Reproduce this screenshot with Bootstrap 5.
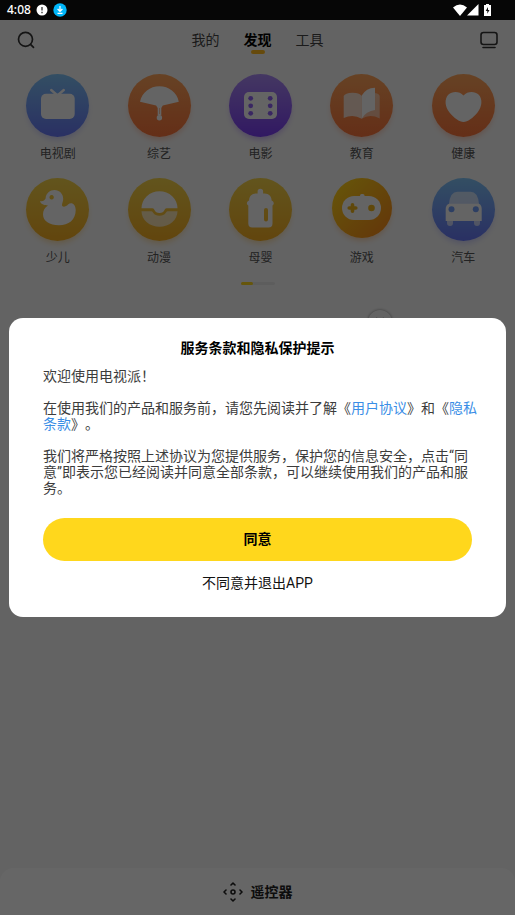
<!DOCTYPE html>
<html lang="zh-CN">
<head>
<meta charset="utf-8">
<meta name="viewport" content="width=device-width, initial-scale=1">
<title>电视派</title>
<link href="https://cdn.jsdelivr.net/npm/bootstrap@5.3.0/dist/css/bootstrap.min.css" rel="stylesheet">
<style>
body{font-family:Roboto,"Noto Sans CJK SC",sans-serif;font-size:14px;line-height:16px;background:#f8f8f8;color:#333;text-spacing-trim:space-all}
svg{display:block}
.status-bar{height:20px;background:#060606;color:#fff;padding:0 23px 0 7px;font-family:"Noto Sans",sans-serif;font-size:12px;font-weight:500;position:relative;z-index:3}
.top-bar{height:40px;padding:0 17px}
.tab-link{color:#444;text-decoration:none;position:relative;line-height:20px}
.tab-link.current{color:#000;font-weight:700}
.tab-link.current::after{content:"";position:absolute;left:7px;right:7px;bottom:-4px;height:4px;border-radius:2px;background:#ffb91e}
.icon-btn{color:#333}
.tiles{padding:14px 1px 0 7px;row-gap:4px}
.tile{height:100px;color:#555;text-decoration:none;font-size:12px}
.disc{width:63px;height:63px;border-radius:50%;margin-bottom:9px;color:#fafafa}
.disc svg{width:100%;height:100%;fill:currentColor}
.sky{background:linear-gradient(#80c4f8,#6878f8);box-shadow:0 4px 6px -2px #8088f866}
.coral{background:linear-gradient(#ffa65c,#fb743b);box-shadow:0 4px 6px -2px #fb743b66}
.violet{background:linear-gradient(#ab8bf5,#7b3df5);box-shadow:0 4px 6px -2px #7b3df566}
.honey{background:linear-gradient(#f5d34a,#f5ad22);box-shadow:0 4px 6px -2px #f5ad2266}
.amber{background:linear-gradient(135deg,#ffd91a,#f98419);box-shadow:0 4px 6px -2px #f9841966;width:60px;height:60px;margin-bottom:12px}
.pager{width:34px;height:3px;border-radius:2px;background:#e9e9e9}
.pager-thumb{width:12px;height:3px;border-radius:2px;background:#ffd71c}
.close-dot{width:24px;height:24px;color:#aaa;background:#f8f8f8;margin:25px 123px 0 auto;box-shadow:0 0 3px #888}
.remote-bar{height:47px;border:0;border-radius:14px 14px 0 0;background:#fff;color:#222;font-weight:700}
.dim{background:rgba(0,0,0,.6);padding:20px 9px 0;z-index:2}
.notice{border-radius:14px;padding:22px 34px 25px;color:#3c3c3c}
.notice-title{font-size:14px;line-height:16px;color:#000;margin-bottom:12px}
.notice-text{margin-right:-6px}
.notice-text p{margin-bottom:16px}
.notice-text a{color:#3a8ee6;text-decoration:none}
.agree{height:43px;background:#ffd71c;color:#000;font-size:14px;font-weight:700;margin-top:6px}
.decline{color:#111;font-size:14px;line-height:18px;margin-top:13px}
</style>
</head>
<body class="min-vh-100 d-flex flex-column">
<header class="status-bar d-flex align-items-center">
  <span>4:08</span>
  <svg class="ms-1" width="14" height="14" viewBox="0 0 14 14"><circle cx="7" cy="7" r="5.5" fill="#fff"/><path d="M7 4v3.500M7 8.800v1.400" stroke="#555" stroke-width="1.600"/></svg>
  <svg class="ms-1" width="14" height="14" viewBox="0 0 14 14"><circle cx="7" cy="7" r="6.700" fill="#00b7fb"/><path d="M7 3v5M4.600 6 7 8.500 9.400 6M4.500 10.300h5" fill="none" stroke="#fff" stroke-width="1.200"/></svg>
  <svg class="ms-auto" width="14" height="12" viewBox="0 0 14 12"><path d="M0 3.500Q7-2.300 14 3.500L7 12Z" fill="#fff"/></svg>
  <svg width="12" height="12" viewBox="0 0 12 12"><path d="M11.500 0v11.500H0Z" fill="#fff"/></svg>
  <svg class="ms-1" width="9" height="12" viewBox="0 0 9 12"><path d="M3 0h3v1h2v11H1V1h2Z" fill="#fff"/><path d="M5 3 2.700 7h1.600v2.700L6.500 6H5Z" fill="#111"/></svg>
</header>
<nav class="top-bar d-flex align-items-center justify-content-between">
  <button class="btn p-0 border-0 icon-btn" aria-label="搜索"><svg width="18" height="18" viewBox="0 0 18 18" fill="none" stroke="currentColor" stroke-width="1.700" stroke-linecap="round"><circle cx="8.500" cy="8.300" r="7"/><path d="m13.500 13.300 3 3"/></svg></button>
  <div class="d-flex gap-4"><a class="tab-link" href="#">我的</a><a class="tab-link current" href="#">发现</a><a class="tab-link" href="#">工具</a></div>
  <button class="btn p-0 border-0 icon-btn" aria-label="投屏"><svg width="18" height="18" viewBox="0 0 18 18" fill="none" stroke="currentColor" stroke-width="1.600" stroke-linecap="round"><rect x="1" y="1.500" width="16" height="12" rx="2.500"/><path d="M3 16.500h12"/></svg></button>
</nav>
<main class="flex-grow-1">
  <div class="tiles row row-cols-5 g-0">
    <a class="col tile d-flex flex-column align-items-center" href="#"><span class="disc sky"><svg viewBox="0 0 63 63"><rect x="15" y="19.700" width="33.700" height="25.300" rx="5"/><path d="m25.200 16 6.300 5.500 6.300-5.500" fill="none" stroke="currentColor" stroke-width="2.400" stroke-linecap="round"/></svg></span>电视剧</a>
    <a class="col tile d-flex flex-column align-items-center" href="#"><span class="disc coral"><svg viewBox="0 0 63 63"><path d="M12 27.700C14 18.500 22 12.300 31.400 12.300S49 18.500 50.800 27.700L34.800 31.400 33.300 34v7.500h-3.600V34l-1.600-2.600Z"/><circle cx="31.400" cy="43.700" r="2.700"/><path d="M31.500 34v6" stroke="#fb8a4c" stroke-opacity=".5"/></svg></span>综艺</a>
    <a class="col tile d-flex flex-column align-items-center" href="#"><span class="disc violet"><svg viewBox="0 0 63 63"><rect x="15" y="18" width="33" height="27" rx="5"/><g fill="#8e60f5"><circle cx="21.700" cy="24.300" r="2.400"/><circle cx="21.700" cy="31.800" r="2.400"/><circle cx="21.700" cy="39.300" r="2.400"/><circle cx="41.200" cy="24.300" r="2.400"/><circle cx="41.200" cy="31.800" r="2.400"/><circle cx="41.200" cy="39.300" r="2.400"/></g></svg></span>电影</a>
    <a class="col tile d-flex flex-column align-items-center" href="#"><span class="disc coral"><svg viewBox="0 0 63 63"><path d="M13.700 22Q15 19 22.500 18.800 29 18.700 31.700 22V44.700Q23 39.500 13.700 44Z" opacity=".75"/><path d="M45 19q4.700.8 4.700 3.500V44.500Q40 39.500 31.700 44.700V22l13.300 0Z" opacity=".5"/><path d="M31.700 21.500Q36 14 45 13.700V36Q36 37 31.700 44.700Z"/></svg></span>教育</a>
    <a class="col tile d-flex flex-column align-items-center" href="#"><span class="disc coral"><svg viewBox="0 0 63 63"><path d="M31.500 21.500C27.500 16.700 20 17 16.500 20.500 12 25 13 33 17.500 38.500 22 44 27.500 48 31.500 48S41 44 45.500 38.500C50 33 51 25 46.500 20.500 43 17 35.500 16.700 31.500 21.500Z"/></svg></span>健康</a>
    <a class="col tile d-flex flex-column align-items-center" href="#"><span class="disc honey"><svg viewBox="0 0 63 63"><path fill-rule="evenodd" d="M19.600 20.500C20 15 24 12 28.500 12 33.500 12 37.200 16 37.200 20.700 37.200 23.500 36 25.300 36 27 36 29.500 40 29 42 26.500 45 23.500 49.700 25.500 49.700 32 49.700 42 42.500 47.300 33 47.300 23.500 47.300 17 43 17 36.500 17 32.500 18.700 29.500 22 27.400 18 27.400 14.500 26 14 23 16.500 24 18.500 22.500 19.600 20.500ZM25.600 17.100a2.200 2.200 0 1 0 .1 0Z"/></svg></span>少儿</a>
    <a class="col tile d-flex flex-column align-items-center" href="#"><span class="disc honey"><svg viewBox="0 0 63 63"><path d="M13.500 30.300a18 17 0 0 1 36 0H38.500Q37 30.300 36.500 32a5.200 4 0 0 1-10 0Q26 30.300 24.500 30.300Z"/><path d="M13.500 33.300H23.500Q24.500 33.300 25.300 35a7 5 0 0 0 12.400 0Q38.500 33.300 39.500 33.300H49.500a18 15.500 0 0 1-36 0Z" opacity=".65"/></svg></span>动漫</a>
    <a class="col tile d-flex flex-column align-items-center" href="#"><span class="disc honey"><svg viewBox="0 0 63 63"><path fill-rule="evenodd" d="M28.600 15.500v-2a2.700 2.700 0 0 1 5.500 0v2h1.500c4.500 0 7 3 7 7 2.700 1 2.700 3.800.9 5V45.500a4 4 0 0 1-4 4H23.300a4 4 0 0 1-4-4V27.500c-2-1.200-2-4 .8-5 0-4 2.500-7 7-7ZM37 30a2 2 0 0 0-2 2v9.500a2 2 0 0 0 4 0V32a2 2 0 0 0-2-2Z"/></svg></span>母婴</a>
    <a class="col tile d-flex flex-column align-items-center" href="#"><span class="disc amber"><svg viewBox="0 0 60 60"><rect x="10" y="18" width="39" height="24" rx="12"/><rect x="28" y="16" width="4.500" height="4" rx="1.500"/><path d="M20.500 26.700v6.600M17.200 30h6.600" stroke="#efb51b" stroke-width="3.600" stroke-linecap="round"/><circle cx="39.500" cy="30" r="3.300" fill="#efb51b"/></svg></span>游戏</a>
    <a class="col tile d-flex flex-column align-items-center" href="#"><span class="disc sky"><svg viewBox="0 0 63 63"><path d="M17 26Q18 13.700 25.500 13.700H38.500Q46 13.700 47 26Z" opacity=".65"/><path d="M15 42h6v3a3 3 0 0 1-6 0ZM42 42h6v3a3 3 0 0 1-6 0Z" opacity=".65"/><path d="M17 25.700H47Q49.700 27 49.700 31V43H13.700V31Q13.700 27 17 25.700Z"/><circle cx="19.500" cy="31.200" r="3" fill="#719df8"/><circle cx="43.800" cy="31.200" r="3" fill="#719df8"/></svg></span>汽车</a>
  </div>
  <div class="pager mx-auto mt-1"><div class="pager-thumb"></div></div>
  <button class="btn close-dot rounded-circle p-0 border-0 d-flex align-items-center justify-content-center" aria-label="关闭"><svg width="10" height="10" viewBox="0 0 10 10"><path d="m1 1 8 8M9 1 1 9" stroke="currentColor" stroke-width="2"/></svg></button>
</main>
<button class="remote-bar w-100 d-flex align-items-center justify-content-center gap-2"><svg width="20" height="20" viewBox="0 0 20 20" fill="none" stroke="currentColor" stroke-width="1.600" stroke-linecap="round" stroke-linejoin="round"><circle cx="10" cy="10" r="2"/><path d="m8 3 2-2 2 2M8 17l2 2 2-2M3 8l-2 2 2 2M17 8l2 2-2 2"/></svg>遥控器</button>
<div class="dim position-fixed top-0 start-0 w-100 h-100 d-flex align-items-center">
  <section class="notice bg-white w-100" role="dialog" aria-modal="true" aria-labelledby="notice-title">
    <h1 class="notice-title text-center fw-bold" id="notice-title">服务条款和隐私保护提示</h1>
    <div class="notice-text">
      <p>欢迎使用电视派！</p>
      <p>在使用我们的产品和服务前，请您先阅读并了解《<a href="#">用户协议</a>》和《<a href="#">隐私条款</a>》。</p>
      <p>我们将严格按照上述协议为您提供服务，保护您的信息安全，点击“同意”即表示您已经阅读并同意全部条款，可以继续使用我们的产品和服务。</p>
    </div>
    <button class="agree btn w-100 rounded-pill border-0 p-0">同意</button>
    <button class="decline btn d-block mx-auto border-0 p-0">不同意并退出APP</button>
  </section>
</div>
</body>
</html>
